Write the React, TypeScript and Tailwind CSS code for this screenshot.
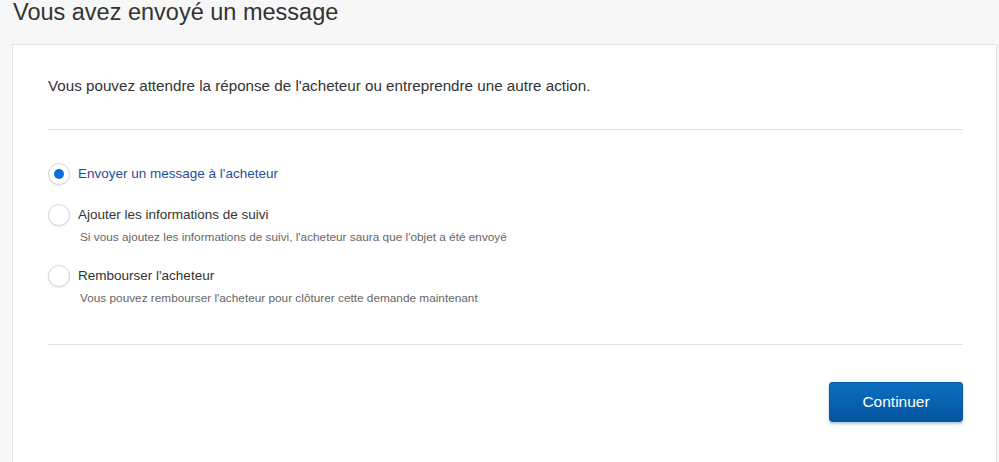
import React from "react";

const font = { fontFamily: '"Liberation Sans", Arial, sans-serif' };

function Radio({ checked }: { checked?: boolean }) {
  return (
    <span className="flex h-[22px] w-[22px] shrink-0 items-center justify-center rounded-full border border-[#d6d6d6] bg-white shadow-[0_1px_2px_rgba(0,0,0,0.08)]">
      {checked && <span className="h-[10px] w-[10px] rounded-full bg-[#0a6fd6]" />}
    </span>
  );
}

function Option({
  label,
  sub,
  checked,
}: {
  label: string;
  sub?: string;
  checked?: boolean;
}) {
  return (
    <div className="flex flex-col">
      <div className="flex items-center gap-[8px]">
        <Radio checked={checked} />
        <span className={`text-[13.5px] leading-[18px] ${checked ? "text-[#1f4f96]" : "text-[#333333]"}`}>{label}</span>
      </div>
      {sub && <div className="ml-[32px] mt-[4px] text-[11.8px] leading-[14px] text-[#666666]">{sub}</div>}
    </div>
  );
}

export default function App() {
  return (
    <div className="h-[462px] w-[999px] overflow-hidden bg-[#f7f7f7]" style={font}>
      <h1 className="ml-[13px] text-[23.5px] leading-[24px] text-[#333333]">Vous avez envoyé un message</h1>
      <div className="ml-[12px] mr-[2px] mt-[20px] h-[440px] border border-[#e3e3e3] bg-white pl-[35px] pr-[33px]">
        <p className="mt-[31px] text-[15.2px] leading-[20px] text-[#333333]">
          Vous pouvez attendre la réponse de l'acheteur ou entreprendre une autre action.
        </p>
        <div className="mt-[33px] h-px bg-[#e0e0e0]" />
        <div className="mt-[33px] flex flex-col gap-[19px]">
          <Option label="Envoyer un message à l'acheteur" checked />
          <div className="flex flex-col gap-[21px]">
            <Option
              label="Ajouter les informations de suivi"
              sub="Si vous ajoutez les informations de suivi, l'acheteur saura que l'objet a été envoyé"
            />
            <Option
              label="Rembourser l'acheteur"
              sub="Vous pouvez rembourser l'acheteur pour clôturer cette demande maintenant"
            />
          </div>
        </div>
        <div className="mt-[39px] h-px bg-[#e0e0e0]" />
        <div className="mt-[37px] flex justify-end">
          <button className="h-[40px] w-[134px] rounded-[3px] border border-[#0a5aa3] bg-gradient-to-b from-[#0b6fc0] to-[#05559f] text-[15.5px] text-white shadow-[0_2px_3px_rgba(0,60,120,0.3)]">
            Continuer
          </button>
        </div>
      </div>
    </div>
  );
}
